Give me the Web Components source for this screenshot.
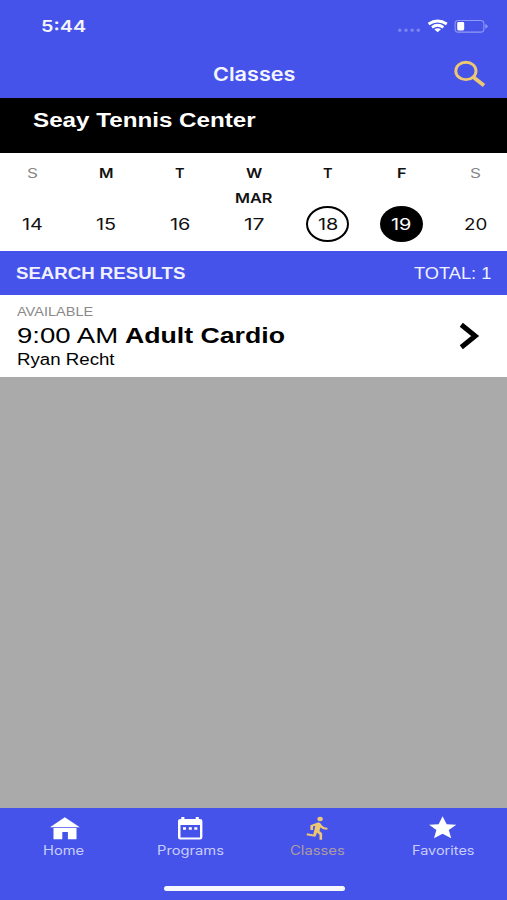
<!DOCTYPE html>
<html lang="en">
<head>
<meta charset="utf-8">
<title>Classes</title>
<style>
  body {
    margin: 0;
    width: 507px;
    height: 900px;
    overflow: hidden;
    font-family: "Liberation Sans", Arial, sans-serif;
  }
</style>
</head>
<body>
<classes-app></classes-app>

<script>
function define(name, html, setup) {
  const template = document.createElement("template");
  template.innerHTML = html;

  customElements.define(name, class extends HTMLElement {
    constructor() {
      super();
      this.attachShadow({ mode: "open" });
      this.shadowRoot.appendChild(template.content.cloneNode(true));
    }

    connectedCallback() {
      if (setup) setup(this, this.shadowRoot);
    }
  });
}

// One line of text, widened to fill the "w" attribute
define("wide-text", `
<style>
  :host {
    display: block;
    flex-shrink: 0;
    white-space: nowrap;
    line-height: 20px;
  }
  span {
    display: inline-block;
    transform-origin: 0 50%;
  }
</style>
<span><slot></slot></span>
`, (host, root) => {
  const width = Number(host.getAttribute("w"));
  const span = root.querySelector("span");
  host.style.width = width + "px";
  requestAnimationFrame(() => {
    span.style.transform = "scaleX(" + width / span.offsetWidth + ")";
  });
});

define("status-bar", `
<style>
  :host {
    display: flex;
    align-items: center;
    justify-content: space-between;
    height: 49px;
    padding: 3px 19px 0 41px;
    box-sizing: border-box;
    color: #f4f5ff;
    font: 600 16.5px Inter, sans-serif;
  }
  svg { display: block; }
</style>
<wide-text w="45.5">5:44</wide-text>
<svg width="92" height="20" viewBox="396 16 92 20">
  <g fill="#7a84f2">
    <circle cx="399.8" cy="30.2" r="1.7"/>
    <circle cx="406" cy="30.2" r="1.7"/>
    <circle cx="412.1" cy="30.2" r="1.7"/>
    <circle cx="418.3" cy="30.2" r="1.7"/>
  </g>
  <g fill="none" stroke="#fff" stroke-width="2.8">
    <path d="M428.6 24Q437.6 18 446.8 24"/>
    <path d="M432 27.3Q437.6 23.3 443.4 27.3"/>
  </g>
  <path fill="#fff" d="M434.3 29.3Q437.6 27.3 441 29.3L437.6 32.2Z"/>
  <rect x="455.1" y="20.5" width="28.8" height="11.6" rx="3.2" fill="none" stroke="#9299f4" stroke-width="1.1"/>
  <path fill="#9299f4" d="M485.3 24Q487.6 25 487.6 26.3T485.3 28.7Z"/>
  <rect x="457.2" y="22.1" width="7" height="8.4" rx="1.4" fill="#fff"/>
</svg>
`);

define("title-bar", `
<style>
  :host {
    display: grid;
    grid-template-columns: 1fr auto 1fr;
    align-items: center;
    height: 49px;
    box-sizing: border-box;
    padding: 0 21px;
    color: #f4f5ff;
    font: 600 18.5px Inter, sans-serif;
  }
  wide-text { grid-column: 2; margin-left: 1px; }
  svg { display: block; justify-self: end; }
</style>
<wide-text w="83"><slot></slot></wide-text>
<svg width="34" height="31" viewBox="452 58 34 31" fill="none" stroke="#edc773">
  <ellipse cx="465.9" cy="70.9" rx="10.1" ry="8.7" stroke-width="2.9"/>
  <path d="M473.2 77L484 85.6" stroke-width="3.8"/>
</svg>
`);

define("center-name", `
<style>
  :host {
    display: block;
    height: 55px;
    box-sizing: border-box;
    padding: 12px 33px 0;
    background: #000;
    color: #fff;
    font-weight: bold;
    font-size: 20px;
  }
</style>
<wide-text w="222.5"><slot></slot></wide-text>
`);

define("week-day", `
<style>
  :host {
    display: grid;
    grid-template-rows: 24px 24px 30px;
    justify-items: center;
    align-items: center;
    color: #111;
    font-family: Inter, sans-serif;
    font-size: 13px;
    font-weight: 600;
  }
  .month { padding-top: 2px; }
  .day {
    display: flex;
    align-items: center;
    justify-content: center;
    width: 43px;
    height: 36px;
    box-sizing: border-box;
    border-radius: 50%;
    padding-top: 2px;
    font-size: 15.5px;
    font-weight: 400;
  }
  :host([weekend]) .letter { color: #858585; font-weight: 400; }
  :host([today]) .day { border: 2px solid #000; }
  :host([selected]) .day { background: #000; color: #fff; }
</style>
<div class="letter"></div>
<div class="month"></div>
<div class="day"></div>
`, (host, root) => {
  const put = (part, text, w) => {
    if (text) root.querySelector(part).innerHTML = `<wide-text w="${w}">${text}</wide-text>`;
  };
  const widths = { S: 10.5, M: 14.5, T: 10, W: 16, F: 10 };
  const letter = host.getAttribute("letter");
  put(".letter", letter, widths[letter]);
  put(".month", host.getAttribute("month"), 37.5);
  put(".day", host.getAttribute("day"), host.getAttribute("day") === "20" ? 23 : 20.5);
});

define("week-strip", `
<style>
  :host {
    display: block;
    height: 98px;
    overflow: hidden;
    background: #fff;
  }
  .week {
    display: grid;
    grid-template-columns: repeat(7, 1fr);
    margin: 0 -5.5px 0 -4.5px;
    padding-top: 8px;
  }
</style>
<div class="week"><slot></slot></div>
`);

define("results-bar", `
<style>
  :host {
    display: flex;
    align-items: center;
    justify-content: space-between;
    height: 44px;
    box-sizing: border-box;
    padding: 2px 16px 0 15.5px;
    background: #4553ea;
    color: #f0f1ff;
    font-size: 16px;
  }
  .label { font-weight: bold; }
</style>
<wide-text class="label" w="170"><slot></slot></wide-text>
<wide-text w="77.5"><slot name="total"></slot></wide-text>
`);

define("class-row", `
<style>
  :host {
    display: flex;
    justify-content: space-between;
    height: 82px;
    box-sizing: border-box;
    padding: 7px 27px 0 16.5px;
    background: #fff;
    color: #000;
  }
  .status { color: #898989; font-size: 13.3px; }
  .headline { display: flex; gap: 7px; margin-top: 4px; font-size: 22px; }
  .headline .name { font-weight: bold; }
  .coach { margin-top: 4px; font-size: 16px; }
  svg { display: block; margin-top: 19px; }
</style>
<div>
  <wide-text class="status" w="76.5"><slot name="status"></slot></wide-text>
  <div class="headline">
    <wide-text w="101.5"><slot name="time"></slot></wide-text>
    <wide-text class="name" w="160"><slot></slot></wide-text>
  </div>
  <wide-text class="coach" w="98"><slot name="coach"></slot></wide-text>
</div>
<svg width="22" height="30" viewBox="458 321 22 30">
  <path d="M461.3 324.8L475.2 336L461.3 347.2" fill="none" stroke="#000" stroke-width="5"/>
</svg>
`);

define("tab-item", `
<style>
  :host {
    display: flex;
    flex-direction: column;
    align-items: center;
    padding-top: 7px;
    color: #c8cdfa;
    font: 400 12.5px Inter, sans-serif;
    --icon: #fff;
  }
  :host([active]) { color: #ad9da0; --icon: #edc773; }
  ::slotted(svg) { display: block; fill: var(--icon); }
</style>
<slot name="icon"></slot>
<div id="label"></div>
`, (host, root) => {
  root.querySelector("#label").innerHTML =
    `<wide-text w="${host.getAttribute("w")}">${host.getAttribute("label")}</wide-text>`;
});

define("tab-bar", `
<style>
  :host {
    display: flex;
    flex-direction: column;
    align-items: center;
    justify-content: space-between;
    height: 92px;
    box-sizing: border-box;
    padding-bottom: 9px;
    background: #4553ea;
  }
  .tabs { display: grid; grid-template-columns: repeat(4, 1fr); width: 506px; }
  .indicator { width: 181px; height: 5.5px; margin-left: 1px; border-radius: 3px; background: #f7f7ff; }
</style>
<div class="tabs"><slot></slot></div>
<div class="indicator"></div>
`);

define("classes-app", `
<style>
  :host {
    display: flex;
    flex-direction: column;
    height: 900px;
    background: #aaa;
  }
  header { background: #4553ea; }
  main { flex: 1; }
</style>
<header>
  <status-bar></status-bar>
  <title-bar>Classes</title-bar>
</header>
<center-name>Seay Tennis Center</center-name>
<week-strip>
  <week-day letter="S" day="14" weekend></week-day>
  <week-day letter="M" day="15"></week-day>
  <week-day letter="T" day="16"></week-day>
  <week-day letter="W" day="17" month="MAR"></week-day>
  <week-day letter="T" day="18" today></week-day>
  <week-day letter="F" day="19" selected></week-day>
  <week-day letter="S" day="20" weekend></week-day>
</week-strip>
<results-bar>SEARCH RESULTS<span slot="total">TOTAL: 1</span></results-bar>
<main>
  <class-row>
    <span slot="status">AVAILABLE</span>
    <span slot="time">9:00 AM</span>
    Adult Cardio
    <span slot="coach">Ryan Recht</span>
  </class-row>
</main>
<tab-bar>
  <tab-item label="Home" w="41">
    <svg slot="icon" width="32" height="26" viewBox="47.5 815 32 26">
      <path d="M64.3 817.3L79.3 827.2H49.5ZM53 828H76V839.2H67.4V832H61.8V839.2H53Z"/>
    </svg>
  </tab-item>
  <tab-item label="Programs" w="67">
    <svg slot="icon" width="26" height="26" viewBox="178 815 26 26">
      <path fill-rule="evenodd" d="M182.3 817H185.4V819H196.7V817H199.8V819H201Q203.4 819 203.4 821V837.3Q203.4 839.5 201 839.5H181.3Q179 839.5 179 837.3V821Q179 819 181.3 819H182.3ZM181.5 825V837.4H201V825ZM184 827.3H187V829.8H184ZM189.8 827.3H192.8V829.8H189.8ZM195.3 827.3H198.3V829.8H195.3Z"/>
    </svg>
  </tab-item>
  <tab-item label="Classes" w="54.5" active>
    <svg slot="icon" width="24" height="26" viewBox="305.5 815 24 26">
      <ellipse cx="320.6" cy="819" rx="2.7" ry="2.2"/>
      <path d="M316.9 834.5L317.4 832.6L320 834.7V839.7H322.6V833.2L320 831L320.8 827.6Q323.3 829.8 327.9 829.8V827.7Q324.3 827.7 322.5 825.4L321.2 823.7Q320.2 822.3 318.2 822.6L310.9 825.2V830H313.5V826.6L315.8 825.8L313.8 834.4L307.6 833.3L307 835.3L315.7 836.8Z"/>
    </svg>
  </tab-item>
  <tab-item label="Favorites" w="62.5">
    <svg slot="icon" width="30" height="26" viewBox="428.5 815 30 26">
      <path d="M443.1 816.3L447.2 824.2L456.8 824.8L449.3 829.9L451.7 838.2L443.1 833.7L434.5 838.2L436.9 829.9L429.6 824.8L439.1 824.2Z"/>
    </svg>
  </tab-item>
</tab-bar>
`);
</script>
</body>
</html>
